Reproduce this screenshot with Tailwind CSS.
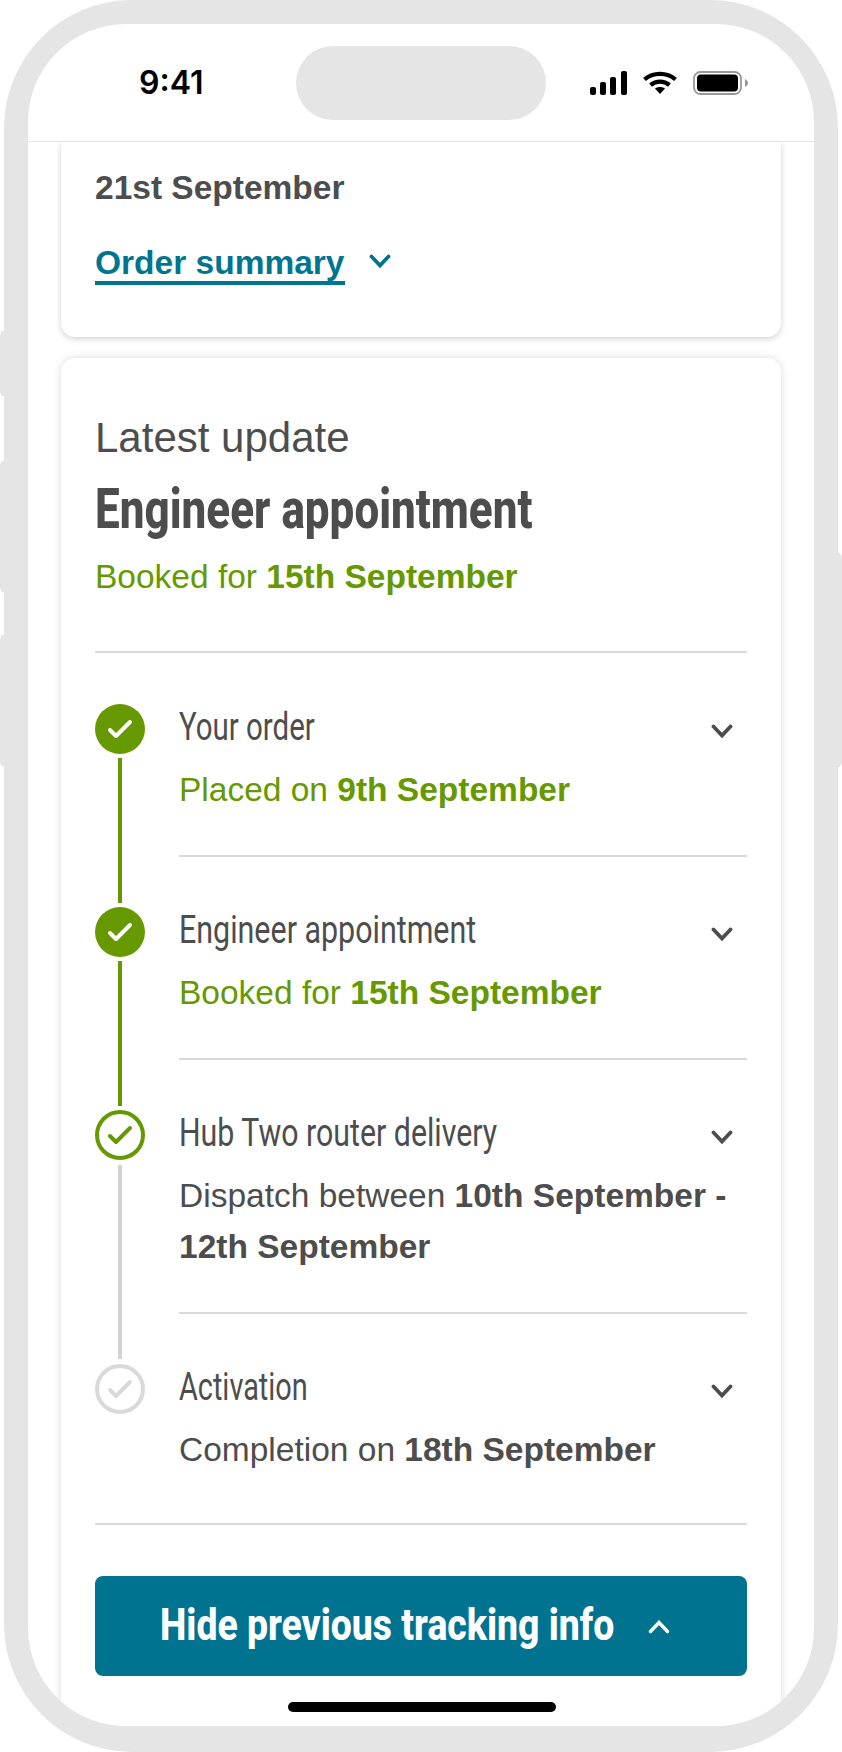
<!DOCTYPE html>
<html lang="en">
<head>
  <meta charset="UTF-8">
  <title>Order tracking</title>
  <script src="https://cdn.jsdelivr.net/npm/@tailwindcss/browser@4"></script>
</head>
<body class="bg-white">
  <div class="relative w-[842px] h-[1752px] overflow-hidden font-['Liberation_Sans',sans-serif] text-[#4d4d4d]">
    <!-- side buttons -->
    <div class="absolute left-0 top-[330px] w-[8px] h-[67px] bg-[#e5e5e5] rounded-l-md"></div>
    <div class="absolute left-0 top-[460px] w-[8px] h-[133px] bg-[#e5e5e5] rounded-l-md"></div>
    <div class="absolute left-0 top-[634px] w-[8px] h-[133px] bg-[#e5e5e5] rounded-l-md"></div>
    <div class="absolute right-0 top-[552px] w-[8px] h-[216px] bg-[#e5e5e5] rounded-r-md"></div>

    <div class="absolute inset-y-0 left-[4px] w-[834px] rounded-[128px] bg-[#e5e5e5] pt-[24px] px-[24px] pb-[26px]">
      <div class="relative h-full rounded-[98px] bg-white overflow-hidden">
        <!-- status bar -->
        <div class="relative h-[118px] border-b border-[#e5e5e5] flex items-center justify-between pl-[111px] pr-[66px]">
          <span class="text-[32px] font-semibold font-['Inter',sans-serif] text-black">9:41</span>
          <div class="absolute left-[268px] top-[22px] w-[250px] h-[74px] rounded-[37px] bg-[#e5e5e5]"></div>
          <div class="flex items-center gap-[16px]">
            <svg width="37" height="24" viewBox="0 0 37 24" fill="#000">
              <rect x="0" y="16" width="6" height="8" rx="2"/>
              <rect x="10" y="11" width="6" height="13" rx="2"/>
              <rect x="20" y="6" width="6" height="18" rx="2"/>
              <rect x="31" y="0" width="6" height="24" rx="2"/>
            </svg>
            <svg width="34" height="23" viewBox="0 0 34 23" fill="none" stroke="#000" stroke-width="4.2">
              <path d="M1.5 8.5 C10 1 24 1 32.5 8.5"/>
              <path d="M7.5 14 C13 9.5 21 9.5 26.5 14"/>
              <path d="M12 17.5 L17 23 L22 17.5 C19 15.5 15 15.5 12 17.5Z" fill="#000" stroke="none"/>
            </svg>
            <svg width="55" height="24" viewBox="0 0 55 24">
              <rect x="1" y="1" width="47" height="22" rx="6.5" fill="none" stroke="#999" stroke-width="1.8"/>
              <rect x="4" y="3.5" width="41" height="17" rx="4" fill="#000"/>
              <path d="M52 8 C54.5 9 55 11 55 12 C55 13 54.5 15 52 16Z" fill="#999"/>
            </svg>
          </div>
        </div>

        <!-- scrolled content -->
        <div class="px-[33px] flex flex-col gap-[21px]">
          <div class="h-[195px] rounded-b-[14px] bg-white shadow-[0_2px_6px_rgba(0,0,0,0.18)] px-[34px] pt-[26px]">
            <p class="text-[33.5px] leading-[40px] font-bold">21st September</p>
            <div class="mt-[37px] flex items-start gap-[24px]">
              <a class="text-[33.5px] leading-[36px] font-bold text-[#007590] border-b-[4px] border-[#007590]">Order summary</a>
              <svg class="mt-[9px]" width="22" height="15" viewBox="0 0 22 15" fill="none" stroke="#007590" stroke-width="3.8" stroke-linecap="round"><path d="M2.5 2.5 L11 11.5 L19.5 2.5"/></svg>
            </div>
          </div>

          <div class="rounded-[14px] bg-white shadow-[0_0_8px_rgba(0,0,0,0.14)] px-[34px] pt-[57px] pb-[120px]">
            <p class="text-[42px] leading-[46px]">Latest update</p>
            <h1 class="mt-[20px] text-[55px] leading-[56px] font-extrabold font-['Roboto',sans-serif] origin-left scale-x-[0.8] whitespace-nowrap">Engineer appointment</h1>
            <p class="mt-[20px] text-[33.5px] leading-[40px] text-[#669900]">Booked for <b>15th September</b></p>
            <div class="mt-[54px] h-[2px] bg-[#d9d9d9]"></div>

            <div class="pt-[51px]">
              <!-- your order -->
              <div class="flex gap-[34px]">
                <div class="w-[50px] shrink-0 flex flex-col items-center">
                  <div class="w-[50px] h-[50px] rounded-full bg-[#669900] flex items-center justify-center">
                    <svg width="28" height="22" viewBox="0 0 28 22" fill="none" stroke="#fff" stroke-width="4" stroke-linecap="round" stroke-linejoin="round"><path d="M4 12 L10 18 L24 4"/></svg>
                  </div>
                  <div class="w-[4px] flex-1 my-[4px] bg-[#669900]"></div>
                </div>
                <div class="flex-1 pt-[1px] pb-[50px]">
                  <div class="flex justify-between pr-[14px]">
                    <h2 class="text-[39px] leading-[44px] font-['Roboto',sans-serif] origin-left scale-x-[0.755] whitespace-nowrap">Your order</h2>
                    <svg class="mt-[19px]" width="22" height="15" viewBox="0 0 22 15" fill="none" stroke="#4d4d4d" stroke-width="3.8" stroke-linecap="round"><path d="M2.5 2.5 L11 11.5 L19.5 2.5"/></svg>
                  </div>
                  <p class="mt-[15px] pb-[40px] border-b-2 border-[#d9d9d9] text-[33.5px] leading-[51px] text-[#669900]">Placed on <b>9th September</b></p>
                </div>
              </div>

              <!-- engineer appointment -->
              <div class="flex gap-[34px]">
                <div class="w-[50px] shrink-0 flex flex-col items-center">
                  <div class="w-[50px] h-[50px] rounded-full bg-[#669900] flex items-center justify-center">
                    <svg width="28" height="22" viewBox="0 0 28 22" fill="none" stroke="#fff" stroke-width="4" stroke-linecap="round" stroke-linejoin="round"><path d="M4 12 L10 18 L24 4"/></svg>
                  </div>
                  <div class="w-[4px] flex-1 my-[4px] bg-[#669900]"></div>
                </div>
                <div class="flex-1 pt-[1px] pb-[50px]">
                  <div class="flex justify-between pr-[14px]">
                    <h2 class="text-[39px] leading-[44px] font-['Roboto',sans-serif] origin-left scale-x-[0.78] whitespace-nowrap">Engineer appointment</h2>
                    <svg class="mt-[19px]" width="22" height="15" viewBox="0 0 22 15" fill="none" stroke="#4d4d4d" stroke-width="3.8" stroke-linecap="round"><path d="M2.5 2.5 L11 11.5 L19.5 2.5"/></svg>
                  </div>
                  <p class="mt-[15px] pb-[40px] border-b-2 border-[#d9d9d9] text-[33.5px] leading-[51px] text-[#669900]">Booked for <b>15th September</b></p>
                </div>
              </div>

              <!-- router delivery -->
              <div class="flex gap-[34px]">
                <div class="w-[50px] shrink-0 flex flex-col items-center">
                  <div class="w-[50px] h-[50px] rounded-full border-4 border-[#669900] flex items-center justify-center">
                    <svg width="28" height="22" viewBox="0 0 28 22" fill="none" stroke="#669900" stroke-width="4" stroke-linecap="round" stroke-linejoin="round"><path d="M4 12 L10 18 L24 4"/></svg>
                  </div>
                  <div class="w-[4px] flex-1 my-[5px] bg-[#d4d4d4]"></div>
                </div>
                <div class="flex-1 pt-[1px] pb-[50px]">
                  <div class="flex justify-between pr-[14px]">
                    <h2 class="text-[39px] leading-[44px] font-['Roboto',sans-serif] origin-left scale-x-[0.777] whitespace-nowrap">Hub Two router delivery</h2>
                    <svg class="mt-[19px]" width="22" height="15" viewBox="0 0 22 15" fill="none" stroke="#4d4d4d" stroke-width="3.8" stroke-linecap="round"><path d="M2.5 2.5 L11 11.5 L19.5 2.5"/></svg>
                  </div>
                  <p class="mt-[15px] pb-[40px] border-b-2 border-[#d9d9d9] text-[33.5px] leading-[51px]">Dispatch between <b>10th September -</b><br><b>12th September</b></p>
                </div>
              </div>

              <!-- activation -->
              <div class="flex gap-[34px]">
                <div class="w-[50px] shrink-0 flex flex-col items-center">
                  <div class="w-[50px] h-[50px] rounded-full border-4 border-[#d9d9d9] flex items-center justify-center">
                    <svg width="28" height="22" viewBox="0 0 28 22" fill="none" stroke="#d9d9d9" stroke-width="4" stroke-linecap="round" stroke-linejoin="round"><path d="M4 12 L10 18 L24 4"/></svg>
                  </div>
                </div>
                <div class="flex-1 pt-[1px]">
                  <div class="flex justify-between pr-[14px]">
                    <h2 class="text-[39px] leading-[44px] font-['Roboto',sans-serif] origin-left scale-x-[0.74] whitespace-nowrap">Activation</h2>
                    <svg class="mt-[19px]" width="22" height="15" viewBox="0 0 22 15" fill="none" stroke="#4d4d4d" stroke-width="3.8" stroke-linecap="round"><path d="M2.5 2.5 L11 11.5 L19.5 2.5"/></svg>
                  </div>
                  <p class="mt-[15px] text-[33.5px] leading-[51px]">Completion on <b>18th September</b></p>
                </div>
              </div>
            </div>

            <div class="mt-[48px] h-[2px] bg-[#d9d9d9]"></div>

            <button class="mt-[51px] w-full h-[100px] rounded-[8px] bg-[#007390] flex items-center gap-[32px] pl-[65px] text-white">
              <span class="w-[456px] pb-[3px] text-left text-[45px] leading-[50px] font-extrabold font-['Roboto',sans-serif] origin-left scale-x-[0.83] whitespace-nowrap">Hide previous tracking info</span>
              <svg width="22" height="15" viewBox="0 0 22 15" fill="none" stroke="#fff" stroke-width="3.4" stroke-linecap="round"><path d="M2.5 12.5 L11 3.5 L19.5 12.5"/></svg>
            </button>
          </div>
        </div>

        <!-- home indicator -->
        <div class="absolute left-[260px] bottom-[14px] w-[268px] h-[10px] rounded-[5px] bg-black"></div>
      </div>
    </div>
  </div>
</body>
</html>
